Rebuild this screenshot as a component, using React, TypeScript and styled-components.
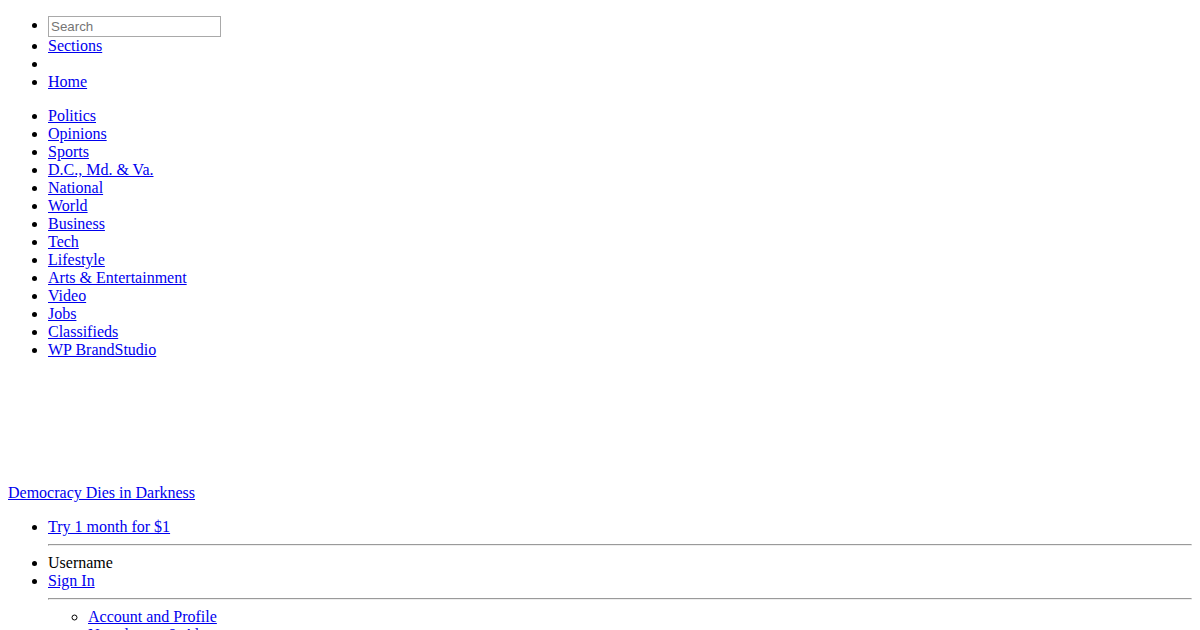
import * as React from 'react'
import styled, { createGlobalStyle } from 'styled-components'

const GlobalStyle = createGlobalStyle`
  body {
    margin: 0;
    background: #fff;
    color: #000;
    font-family: "Liberation Serif", "Times New Roman", serif;
    font-size: 16px;
    line-height: 18px;
  }
`

const Page = styled.div`
  display: flow-root;
  padding: 0 8px;
`

const NavList = styled.ul<{ nested?: boolean }>`
  margin: ${props => (props.nested ? '0' : '16px 0')};
  padding-left: 40px;
  list-style: ${props => (props.nested ? 'circle' : 'disc')};
`

const NavItem = styled.li<{ blank?: boolean }>`
  min-height: ${props => (props.blank ? '18px' : '0')};
`

const NavLink = styled.a`
  color: #0000ee;
  text-decoration: underline;
`

const SearchBox = styled.input`
  box-sizing: border-box;
  width: 173px;
  height: 21px;
  margin: 0;
  padding: 1px 2px;
  border: 1px solid #a9a9a9;
  font-family: "Liberation Sans", Arial, sans-serif;
  font-size: 13.33px;
  vertical-align: top;
  color: #000;
  &::placeholder {
    color: #757575;
  }
`

const LogoSlot = styled.div`
  height: 109px;
`

const Tagline = styled.div`
  display: block;
`

const Rule = styled.hr`
  margin: 8px 0;
  border-width: 1px;
  border-style: inset;
  color: gray;
`

const sections = [
  'Politics',
  'Opinions',
  'Sports',
  'D.C., Md. & Va.',
  'National',
  'World',
  'Business',
  'Tech',
  'Lifestyle',
  'Arts & Entertainment',
  'Video',
  'Jobs',
  'Classifieds',
  'WP BrandStudio',
]

const accountLinks = ['Account and Profile', 'Newsletters & Alerts', 'Gift Subscriptions', 'Sign Out']

export default function App() {
  return (
    <Page>
      <GlobalStyle />
      <NavList>
        <NavItem>
          <SearchBox type="text" placeholder="Search" />
        </NavItem>
        <NavItem>
          <NavLink href="#">Sections</NavLink>
        </NavItem>
        <NavItem blank />
        <NavItem>
          <NavLink href="#">Home</NavLink>
        </NavItem>
      </NavList>
      <NavList>
        {sections.map(s => (
          <NavItem key={s}>
            <NavLink href="#">{s}</NavLink>
          </NavItem>
        ))}
      </NavList>
      <LogoSlot />
      <Tagline>
        <NavLink href="#">Democracy Dies in Darkness</NavLink>
      </Tagline>
      <NavList>
        <NavItem>
          <NavLink href="#">Try 1 month for $1</NavLink>
        </NavItem>
        <Rule />
        <NavItem>Username</NavItem>
        <NavItem>
          <NavLink href="#">Sign In</NavLink>
        </NavItem>
        <Rule />
        <NavList nested>
          {accountLinks.map(a => (
            <NavItem key={a}>
              <NavLink href="#">{a}</NavLink>
            </NavItem>
          ))}
        </NavList>
      </NavList>
    </Page>
  )
}
